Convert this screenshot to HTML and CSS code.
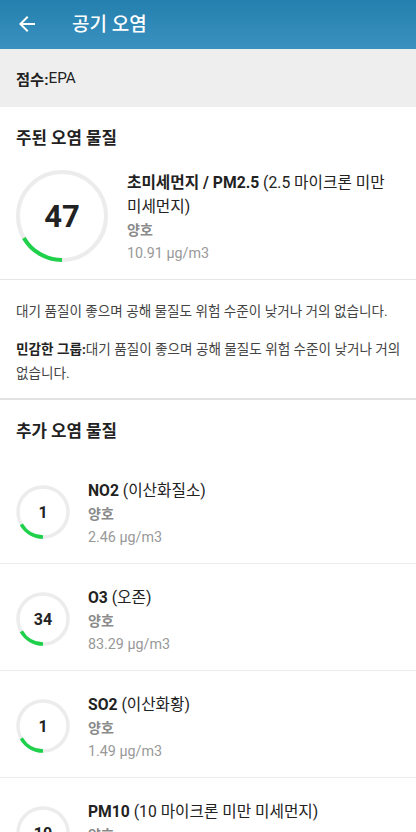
FILE: index.html
```html
<!DOCTYPE html>
<html lang="ko">
<head>
<meta charset="utf-8">
<title>공기 오염</title>
<link rel="stylesheet" href="styles.css">
</head>
<body>
<header class="appbar">
  <svg class="back" width="24" height="24" viewBox="0 0 24 24"><path d="M20 11H7.83l5.59-5.59L12 4l-8 8 8 8 1.41-1.41L7.83 13H20v-2z" fill="#fff"/></svg>
  <h1 class="title">공기 오염</h1>
</header>
<div class="scorebar"><b>점수:</b>EPA</div>

<section class="main">
  <h2 class="heading">주된 오염 물질</h2>
  <div class="main-row">
    <div class="gauge big">
      <svg width="92" height="92" viewBox="0 0 92 92">
        <circle cx="46" cy="46" r="44" class="track" stroke-width="4"/>
        <circle cx="46" cy="46" r="44" class="arc" stroke-width="4" pathLength="360" stroke-dasharray="60 300" transform="rotate(90 46 46)"/>
      </svg>
      <span class="num">47</span>
    </div>
    <div class="info">
      <div class="name"><b>초미세먼지 / PM2.5</b> (2.5 마이크론 미만 미세먼지)</div>
      <div class="level">양호</div>
      <div class="value">10.91 µg/m3</div>
    </div>
  </div>
</section>

<section class="desc">
  <p>대기 품질이 좋으며 공해 물질도 위험 수준이 낮거나 거의 없습니다.</p>
  <p><b>민감한 그룹:</b>대기 품질이 좋으며 공해 물질도 위험 수준이 낮거나 거의 없습니다.</p>
</section>

<section class="extra">
  <h2 class="heading">추가 오염 물질</h2>
  <div class="item">
    <div class="gauge small">
      <svg width="54" height="54" viewBox="0 0 54 54">
        <circle cx="27" cy="27" r="25" class="track" stroke-width="3.5"/>
        <circle cx="27" cy="27" r="25" class="arc" stroke-width="3.5" pathLength="360" stroke-dasharray="60 300" transform="rotate(90 27 27)"/>
      </svg>
      <span class="num">1</span>
    </div>
    <div class="info">
      <div class="name"><b>NO2</b> (이산화질소)</div>
      <div class="level">양호</div>
      <div class="value">2.46 µg/m3</div>
    </div>
  </div>
  <div class="item">
    <div class="gauge small">
      <svg width="54" height="54" viewBox="0 0 54 54">
        <circle cx="27" cy="27" r="25" class="track" stroke-width="3.5"/>
        <circle cx="27" cy="27" r="25" class="arc" stroke-width="3.5" pathLength="360" stroke-dasharray="60 300" transform="rotate(90 27 27)"/>
      </svg>
      <span class="num">34</span>
    </div>
    <div class="info">
      <div class="name"><b>O3</b> (오존)</div>
      <div class="level">양호</div>
      <div class="value">83.29 µg/m3</div>
    </div>
  </div>
  <div class="item">
    <div class="gauge small">
      <svg width="54" height="54" viewBox="0 0 54 54">
        <circle cx="27" cy="27" r="25" class="track" stroke-width="3.5"/>
        <circle cx="27" cy="27" r="25" class="arc" stroke-width="3.5" pathLength="360" stroke-dasharray="60 300" transform="rotate(90 27 27)"/>
      </svg>
      <span class="num">1</span>
    </div>
    <div class="info">
      <div class="name"><b>SO2</b> (이산화황)</div>
      <div class="level">양호</div>
      <div class="value">1.49 µg/m3</div>
    </div>
  </div>
  <div class="item">
    <div class="gauge small">
      <svg width="54" height="54" viewBox="0 0 54 54">
        <circle cx="27" cy="27" r="25" class="track" stroke-width="3.5"/>
        <circle cx="27" cy="27" r="25" class="arc" stroke-width="3.5" pathLength="360" stroke-dasharray="60 300" transform="rotate(90 27 27)"/>
      </svg>
      <span class="num">10</span>
    </div>
    <div class="info">
      <div class="name"><b>PM10</b> (10 마이크론 미만 미세먼지)</div>
      <div class="level">양호</div>
      <div class="value">9.80 µg/m3</div>
    </div>
  </div>
</section>
</body>
</html>
```

FILE: styles.css
```css
* { box-sizing: border-box; }
html, body { margin: 0; padding: 0; }
body {
  width: 416px;
  height: 832px;
  overflow: hidden;
  background: #fff;
  font-family: Roboto, "Noto Sans CJK KR", sans-serif;
  color: #222;
  word-break: keep-all;
}
.appbar {
  height: 49px;
  display: flex;
  align-items: center;
  padding-left: 15px;
  background: linear-gradient(#2480ae, #3a91c0);
}
.back { display: block; margin-top: -2px; }
.title {
  margin: 0 0 0 33px;
  font-size: 19px;
  font-weight: 500;
  color: #fff;
  line-height: 24px;
}
.scorebar {
  height: 58px;
  display: flex;
  align-items: center;
  padding: 0 16px;
  background: #eeeeee;
  font-size: 15.3px;
  color: #222;
}
.heading {
  margin: 0;
  font-size: 16.8px;
  font-weight: 700;
  line-height: 24px;
  color: #222;
}
.main {
  padding: 19px 16px 14px;
  border-bottom: 1px solid #e6e6e6;
}
.main-row {
  display: flex;
  align-items: flex-start;
  margin-top: 20px;
  gap: 19px;
}
.gauge {
  position: relative;
  flex: none;
  display: flex;
  align-items: center;
  justify-content: center;
}
.gauge svg { display: block; }
.gauge .num {
  position: absolute;
  inset: 0;
  display: flex;
  align-items: center;
  justify-content: center;
  font-weight: 700;
  color: #222;
}
.big .num { font-size: 31px; }
.small .num { font-size: 16px; }
.track { fill: none; stroke: #ececec; }
.arc { fill: none; stroke: #1fd14a; }
.info { min-width: 0; }
.main .info { padding-top: 1px; }
.name {
  font-size: 15.7px;
  line-height: 24px;
  color: #222;
}
.name b { font-weight: 700; }
.level {
  font-size: 14px;
  font-weight: 700;
  line-height: 23px;
  color: #8a8a8a;
}
.value {
  font-size: 14.3px;
  line-height: 23px;
  color: #999;
}
.desc {
  padding: 19px 8px 13px 16px;
  border-bottom: 2px solid #e2e2e2;
}
.desc p {
  margin: 0 0 14px;
  font-size: 13.6px;
  line-height: 24px;
  color: #444;
}
.desc p:last-child { margin-bottom: 0; }
.desc b { color: #222; }
.extra { padding-top: 19px; }
.extra .heading { padding: 0 16px 14px; }
.item {
  display: flex;
  align-items: flex-start;
  gap: 18px;
  padding: 22px 16px 14px;
  border-bottom: 1px solid #ececec;
}
.item .gauge { margin-top: 6px; }
```
